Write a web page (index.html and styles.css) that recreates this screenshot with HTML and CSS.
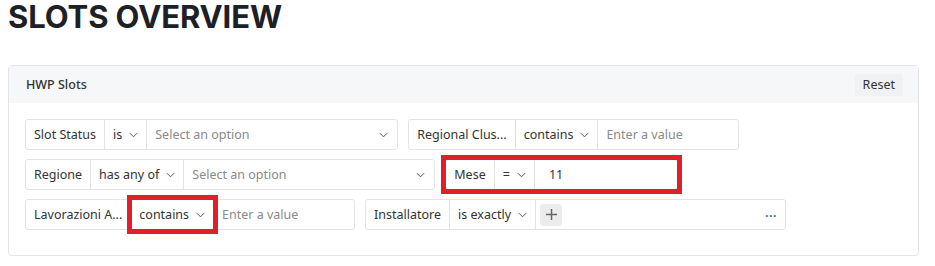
FILE: index.html
```html
<!DOCTYPE html>
<html lang="en">
<head>
    <meta charset="UTF-8">
    <meta name="viewport" content="width=device-width, initial-scale=1.0">
    <title>Slots Overview</title>
    <link rel="stylesheet" href="styles.css">
</head>
<body>
    <h1 class="page-title">SLOTS OVERVIEW</h1>

    <section class="card">
        <header class="card-header">
            <span class="card-title">HWP Slots</span>
            <button class="btn-reset">Reset</button>
        </header>

        <div class="card-body">
            <div class="filter-row">
                <div class="filter">
                    <span class="seg seg-field">Slot Status</span>
                    <span class="seg seg-op">is <svg class="chev" viewBox="0 0 10 6"><path d="M1 1l4 4 4-4"/></svg></span>
                    <span class="seg seg-select w-select">
                        <span class="placeholder">Select an option</span>
                        <svg class="chev" viewBox="0 0 10 6"><path d="M1 1l4 4 4-4"/></svg>
                    </span>
                </div>
                <div class="filter">
                    <span class="seg seg-field">Regional Clus...</span>
                    <span class="seg seg-op">contains <svg class="chev" viewBox="0 0 10 6"><path d="M1 1l4 4 4-4"/></svg></span>
                    <span class="seg seg-value w-input"><span class="placeholder">Enter a value</span></span>
                </div>
            </div>

            <div class="filter-row">
                <div class="filter">
                    <span class="seg seg-field">Regione</span>
                    <span class="seg seg-op">has any of <svg class="chev" viewBox="0 0 10 6"><path d="M1 1l4 4 4-4"/></svg></span>
                    <span class="seg seg-select w-select">
                        <span class="placeholder">Select an option</span>
                        <svg class="chev" viewBox="0 0 10 6"><path d="M1 1l4 4 4-4"/></svg>
                    </span>
                </div>
                <div class="filter highlight">
                    <span class="seg seg-field">Mese</span>
                    <span class="seg seg-op">= <svg class="chev" viewBox="0 0 10 6"><path d="M1 1l4 4 4-4"/></svg></span>
                    <span class="seg seg-value w-number">11</span>
                </div>
            </div>

            <div class="filter-row">
                <div class="filter">
                    <span class="seg seg-field">Lavorazioni A...</span>
                    <span class="seg seg-op highlight">contains <svg class="chev" viewBox="0 0 10 6"><path d="M1 1l4 4 4-4"/></svg></span>
                    <span class="seg seg-value w-input"><span class="placeholder">Enter a value</span></span>
                </div>
                <div class="filter">
                    <span class="seg seg-field">Installatore</span>
                    <span class="seg seg-op">is exactly <svg class="chev" viewBox="0 0 10 6"><path d="M1 1l4 4 4-4"/></svg></span>
                    <span class="seg seg-tags">
                        <button class="btn-add"><svg viewBox="0 0 14 14"><path d="M7 1v12M1 7h12"/></svg></button>
                        <span class="more">...</span>
                    </span>
                </div>
            </div>
        </div>
    </section>
</body>
</html>
```

FILE: styles.css
```css
* {
    box-sizing: border-box;
}

body {
    margin: 0 8px;
    font-family: "Noto Sans", "Open Sans", sans-serif;
    font-size: 12.5px;
    color: #333;
    background: #fff;
}

.page-title {
    font-family: Inter, "Liberation Sans", sans-serif;
    font-size: 31px;
    font-weight: 700;
    line-height: 34px;
    letter-spacing: -0.1px;
    color: #1d2126;
    margin: 0 0 31px;
}

.card {
    border: 1px solid #e4e5e8;
    border-radius: 4px;
    width: 911px;
}

.card-header {
    display: flex;
    align-items: center;
    justify-content: space-between;
    height: 37px;
    padding: 0 15px 0 17px;
    background: #f6f7f9;
}

.card-title {
    font-weight: 500;
    color: #333;
}

.btn-reset {
    font: inherit;
    color: #333;
    border: 0;
    border-radius: 3px;
    background: #f0f1f3;
    height: 22px;
    padding: 0 8px;
}

.card-body {
    display: flex;
    flex-direction: column;
    gap: 9px;
    padding: 16px 16px 25px;
}

.filter-row {
    display: flex;
    gap: 10px;
}

.filter {
    display: flex;
    height: 31px;
    border: 1px solid #e2e3e5;
    border-radius: 3px;
    background: #fff;
}

.seg {
    display: flex;
    align-items: center;
    gap: 7px;
    padding: 0 8px;
    white-space: nowrap;
}

.seg + .seg {
    border-left: 1px solid #e2e3e5;
}

.seg-select {
    justify-content: space-between;
    padding-right: 9px;
}

.w-select {
    width: 251px;
}

.w-input {
    width: 141px;
}

.w-number {
    width: 143px;
    padding-left: 14px;
}

.placeholder {
    color: #8a8a8a;
}

.chev {
    width: 9px;
    height: 6px;
    fill: none;
    stroke: #555;
    stroke-width: 1.1;
}

.seg-tags {
    width: 250px;
    justify-content: space-between;
    padding: 0 8px 0 4px;
}

.btn-add {
    display: flex;
    align-items: center;
    justify-content: center;
    width: 22px;
    height: 22px;
    padding: 0;
    border: 0;
    border-radius: 3px;
    background: #ececec;
}

.btn-add svg {
    width: 13px;
    height: 13px;
    stroke: #666;
    stroke-width: 1.6;
}

.more {
    color: #3d74c4;
    font-weight: 700;
    letter-spacing: 0.5px;
    margin-bottom: 4px;
}

/* red annotation boxes drawn over the filters */
.highlight {
    position: relative;
}

.highlight::after {
    content: "";
    position: absolute;
    inset: -5px;
    border: 5px solid #e01f2b;
    pointer-events: none;
    z-index: 1;
}

.seg.highlight::after {
    inset: -5px -4px -5px -4px;
    right: -5px;
}
```
